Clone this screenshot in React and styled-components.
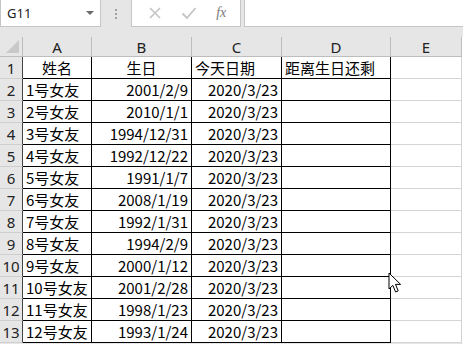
import React from 'react'
import styled, {createGlobalStyle} from 'styled-components'

const GlobalStyle = createGlobalStyle`
  html, body {
    margin: 0;
    padding: 0;
    background: #e6e6e6;
    overflow: hidden;
  }
  * { box-sizing: border-box; }
`

const columns = ['A', 'B', 'C', 'D', 'E']
const widths = [23, 69, 100, 90, 109, 71]

const rows = [
  ['1号女友', '2001/2/9'],
  ['2号女友', '2010/1/1'],
  ['3号女友', '1994/12/31'],
  ['4号女友', '1992/12/22'],
  ['5号女友', '1991/1/7'],
  ['6号女友', '2008/1/19'],
  ['7号女友', '1992/1/31'],
  ['8号女友', '1994/2/9'],
  ['9号女友', '2000/1/12'],
  ['10号女友', '2001/2/28'],
  ['11号女友', '1998/1/23'],
  ['12号女友', '1993/1/24'],
]

const Page = styled.div`
  position: relative;
  width: 463px;
  height: 344px;
  background: #e6e6e6;
  font-family: "Noto Sans CJK SC", "Noto Sans", sans-serif;
  overflow: hidden;
`

const Toolbar = styled.div`
  display: flex;
  align-items: stretch;
  height: 27px;
  margin-bottom: 10px;
`

const NameBox = styled.div`
  width: 101px;
  display: flex;
  align-items: center;
  justify-content: space-between;
  padding: 0 6px 0 6px;
  background: #fff;
  border: 1px solid #c6c6c6;
  border-top: none;
  font-family: "Noto Sans", "Liberation Sans", sans-serif;
  font-size: 13px;
  color: #222;
`

const Caret = styled.span`
  width: 0;
  height: 0;
  border-left: 4px solid transparent;
  border-right: 4px solid transparent;
  border-top: 4px solid #6a6a6a;
`

const Grip = styled.div`
  width: 30px;
  display: flex;
  flex-direction: column;
  align-items: center;
  justify-content: center;
  gap: 2px;
  span {
    width: 2px;
    height: 2px;
    background: #a0a0a0;
  }
`

const FxButtons = styled.div`
  width: 110px;
  display: flex;
  align-items: center;
  justify-content: space-around;
  padding: 0 4px 0 6px;
  background: #fff;
  border: 1px solid #c6c6c6;
  border-top: none;
`

const FxLabel = styled.span`
  font-family: "Liberation Serif", serif;
  font-style: italic;
  font-size: 14px;
  color: #777;
`

const FormulaInput = styled.div`
  flex: 1;
  margin-left: 3px;
  background: #fff;
  border: 1px solid #c6c6c6;
  border-top: none;
  border-right: none;
`

const Grid = styled.div`
  display: grid;
  grid-template-columns: ${widths.map((w) => w + 'px').join(' ')};
  grid-template-rows: 20px repeat(13, 22px);
  background: #fff;
`

const Corner = styled.div`
  position: relative;
  background: #e6e6e6;
  border-right: 1px solid #bdbdbd;
  border-bottom: 1px solid #bdbdbd;
  &::after {
    content: '';
    position: absolute;
    right: 3px;
    bottom: 3px;
    border-left: 13px solid transparent;
    border-bottom: 13px solid #c8c8c8;
  }
`

const ColHead = styled.div`
  display: flex;
  align-items: center;
  justify-content: center;
  background: #e6e6e6;
  border-right: 1px solid #bdbdbd;
  border-bottom: 1px solid #bdbdbd;
  font-family: "Noto Sans", "Liberation Sans", sans-serif;
  font-size: 15px;
  color: #222;
`

const RowHead = styled.div`
  display: flex;
  align-items: center;
  justify-content: center;
  background: #e6e6e6;
  border-right: 1px solid ${(p) => (p.$dark ? '#444' : '#bdbdbd')};
  border-bottom: 1px solid #cfcfcf;
  font-family: "Noto Sans", "Liberation Sans", sans-serif;
  font-size: 15px;
  color: #222;
`

const Cell = styled.div`
  display: flex;
  align-items: center;
  justify-content: ${(p) => (p.$align === 'right' ? 'flex-end' : p.$align === 'center' ? 'center' : 'flex-start')};
  padding: 0 3px;
  border-right: 1px solid ${(p) => (p.$boxed ? '#000' : '#d4d4d4')};
  border-bottom: 1px solid ${(p) => (p.$boxed ? '#000' : '#d4d4d4')};
  font-size: 15px;
  line-height: 1;
  color: #000;
  white-space: nowrap;
  overflow: hidden;
`

const Pointer = styled.svg`
  position: absolute;
  left: 388px;
  top: 272px;
`

const App = () => {
  const header = [
    {text: '姓名', align: 'center'},
    {text: '生日', align: 'center'},
    {text: '今天日期', align: 'left'},
    {text: '距离生日还剩', align: 'left'},
  ]

  return (
    <Page>
      <GlobalStyle />
      <Toolbar>
        <NameBox>
          <span>G11</span>
          <Caret />
        </NameBox>
        <Grip>
          <span />
          <span />
          <span />
        </Grip>
        <FxButtons>
          <svg width="14" height="14" viewBox="0 0 14 14">
            <path d="M2 2 L12 12 M12 2 L2 12" stroke="#c4c4c4" strokeWidth="1.6" fill="none" />
          </svg>
          <svg width="16" height="14" viewBox="0 0 16 14">
            <path d="M1.5 7.5 L6 12 L14.5 2" stroke="#c4c4c4" strokeWidth="1.8" fill="none" />
          </svg>
          <FxLabel>fx</FxLabel>
        </FxButtons>
        <FormulaInput />
      </Toolbar>

      <Grid>
        <Corner />
        {columns.map((c) => (
          <ColHead key={c}>{c}</ColHead>
        ))}

        <RowHead $dark>1</RowHead>
        {header.map((h) => (
          <Cell key={h.text} $boxed $align={h.align}>{h.text}</Cell>
        ))}
        <Cell />

        {rows.map(([name, birth], i) => (
          <React.Fragment key={name}>
            <RowHead $dark>{i + 2}</RowHead>
            <Cell $boxed>{name}</Cell>
            <Cell $boxed $align="right">{birth}</Cell>
            <Cell $boxed $align="right">2020/3/23</Cell>
            <Cell $boxed />
            <Cell />
          </React.Fragment>
        ))}
      </Grid>

      <Pointer width="14" height="22" viewBox="0 0 14 22">
        <path
          d="M1 1 L1 17 L4.8 13.4 L7.6 20 L10.2 18.9 L7.5 12.4 L12.6 12.4 Z"
          fill="#fff"
          stroke="#000"
          strokeWidth="1"
          strokeLinejoin="round"
        />
      </Pointer>
    </Page>
  )
}

export default App
